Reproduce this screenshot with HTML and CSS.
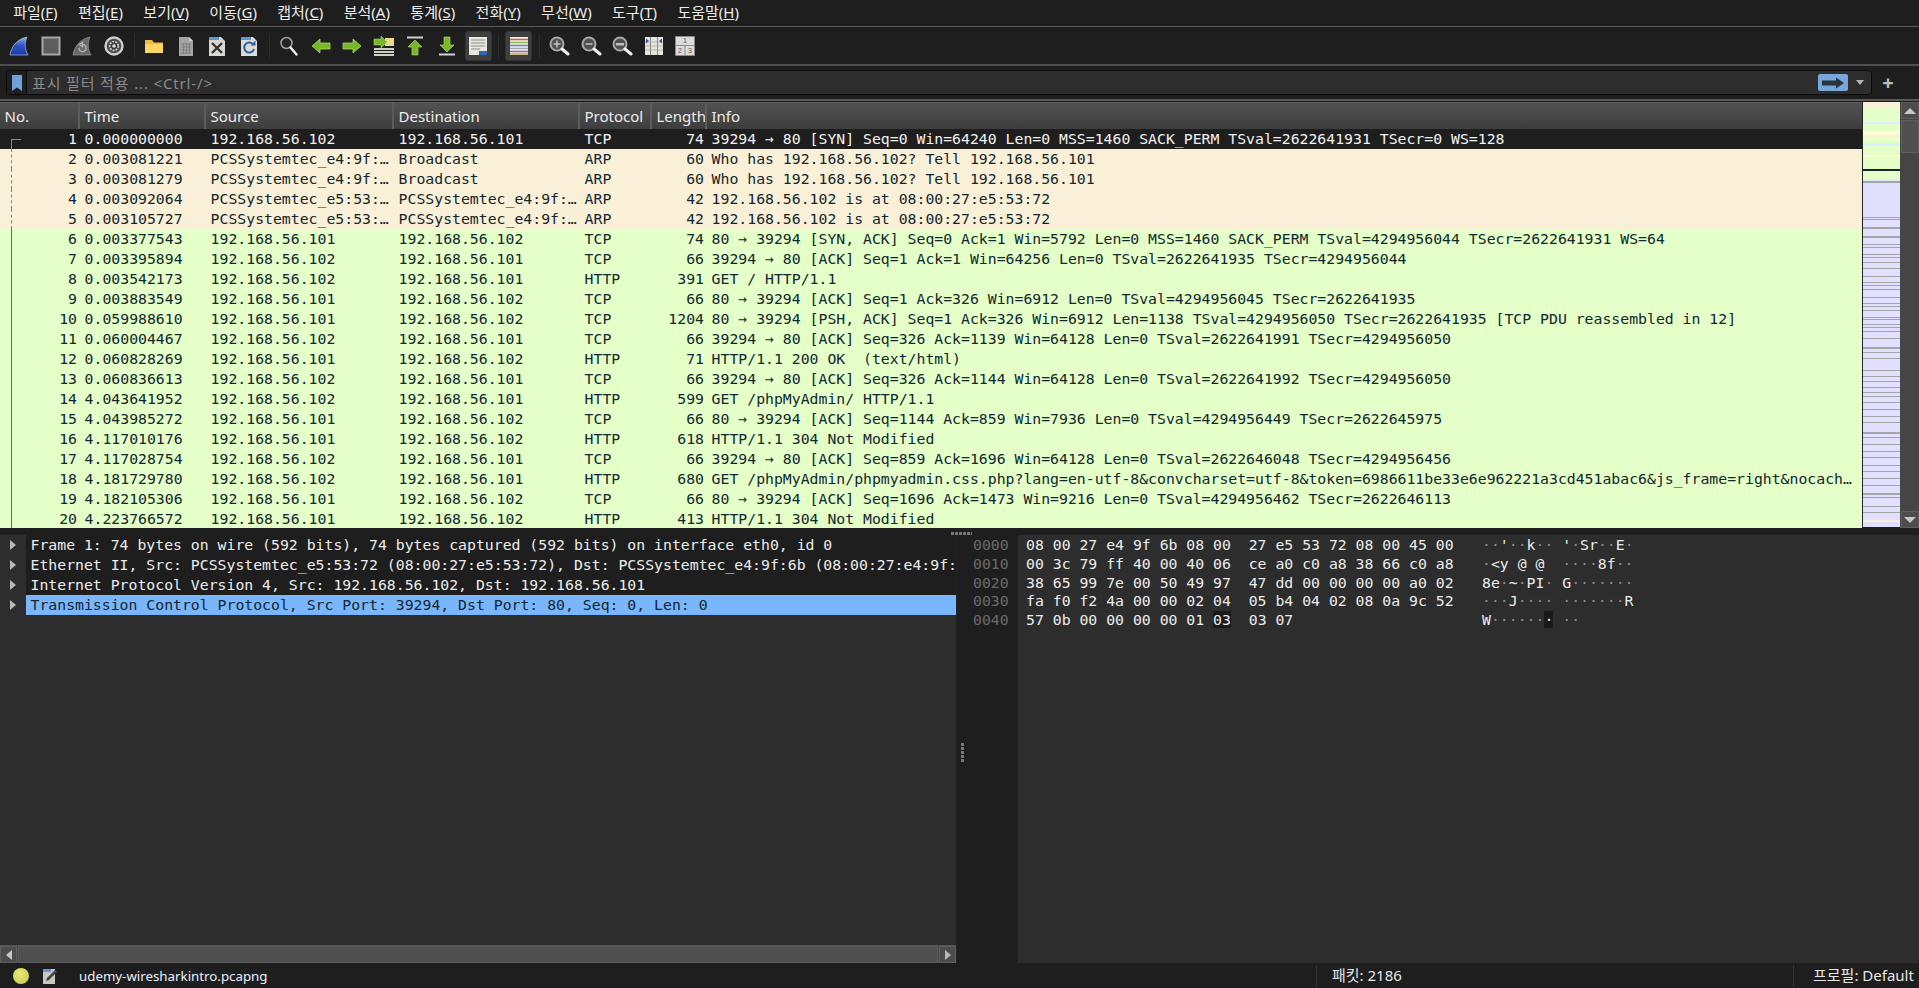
FILE: index.html
```html
<!DOCTYPE html>
<html lang="ko">
<head>
<meta charset="utf-8">
<title>udemy-wiresharkintro.pcapng</title>
<link rel="stylesheet" href="styles.css">
</head>
<body>
<nav class="menubar">
  <span class="menu">파일(<u>F</u>)</span><span class="menu">편집(<u>E</u>)</span><span class="menu">보기(<u>V</u>)</span><span class="menu">이동(<u>G</u>)</span><span class="menu">캡처(<u>C</u>)</span><span class="menu">분석(<u>A</u>)</span><span class="menu">통계(<u>S</u>)</span><span class="menu">전화(<u>Y</u>)</span><span class="menu">무선(<u>W</u>)</span><span class="menu">도구(<u>T</u>)</span><span class="menu">도움말(<u>H</u>)</span>
</nav>
<div class="toolbar">
  <span class="tool"><svg width="22" height="22" viewBox="0 0 22 22"><defs><linearGradient id="fin" x1="0" y1="0" x2="0" y2="1"><stop offset="0" stop-color="#8fb4e8"/><stop offset=".45" stop-color="#2f55c8"/><stop offset="1" stop-color="#1c3aa8"/></linearGradient></defs><path d="M2 20C3 12 9 4 19 2C16.500 8 16.500 14 20 20Z" fill="url(#fin)" stroke="#c7d3ea" stroke-width=".6"/></svg></span>
  <span class="tool"><svg width="22" height="22" viewBox="0 0 22 22"><rect x="2.500" y="2.500" width="17" height="17" fill="#5e5e5e" stroke="#a8a8a8" stroke-width="2"/></svg></span>
  <span class="tool"><svg width="22" height="22" viewBox="0 0 22 22"><path d="M2 20C3 12 9 4 19 2C16.500 8 16.500 14 20 20Z" fill="#6a6a6a" stroke="#999" stroke-width=".7"/><path d="M8 13a3.600 3.600 0 1 0 3.500-3.500M11.500 7.500v4l-3-2z" fill="none" stroke="#b5b5b5" stroke-width="1.300"/></svg></span>
  <span class="tool"><svg width="22" height="22" viewBox="0 0 22 22"><circle cx="11" cy="11" r="8.500" fill="#4a4a4a" stroke="#d0d0d0" stroke-width="2.400"/><circle cx="11" cy="11" r="4.300" fill="#3a3a3a" stroke="#c8c8c8" stroke-width="1.800" stroke-dasharray="2 1"/><circle cx="11" cy="11" r="1.800" fill="#ddd"/></svg></span>
  <i class="sep"></i>
  <span class="tool"><svg width="22" height="22" viewBox="0 0 22 22"><path d="M2 18V5h7l2 2.500h9V18Z" fill="#f3b93a"/><path d="M2 18V9h18v9Z" fill="#fbd865"/></svg></span>
  <span class="tool"><svg width="22" height="22" viewBox="0 0 22 22"><path d="M4 2h10l4 4v15H4Z" fill="#a3a3a3"/><path d="M14 2v4h4z" fill="#d0d0d0"/><path d="M6 9h10M6 12h10M6 15h10M6 18h10M8.500 8v11M11.500 8v11M14.500 8v11" stroke="#7c7c7c" stroke-width=".8" fill="none"/></svg></span>
  <span class="tool"><svg width="22" height="22" viewBox="0 0 22 22"><path d="M3 2h12l4 4v15H3Z" fill="#d9d9cf"/><path d="M3 2h10v3H3z" fill="#5f9ad8"/><path d="M6 8l10 10M16 8 6 18" stroke="#333" stroke-width="2.400"/></svg></span>
  <span class="tool"><svg width="22" height="22" viewBox="0 0 22 22"><path d="M3 2h12l4 4v15H3Z" fill="#dcdcd2"/><path d="M3 2h10v3H3z" fill="#5f9ad8"/><path d="M15.500 10a5 5 0 1 0 .5 4" fill="none" stroke="#2b62ac" stroke-width="2"/><path d="M12.500 10.500h5v-5z" fill="#2b62ac"/></svg></span>
  <i class="sep"></i>
  <span class="tool"><svg width="22" height="22" viewBox="0 0 22 22"><circle cx="8.500" cy="8" r="5.500" fill="#242424" stroke="#a4a4a4" stroke-width="1.500"/><path d="M12.500 12.500l6 7" stroke="#f0f0f0" stroke-width="2.400" stroke-linecap="round"/></svg></span>
  <span class="tool"><svg width="22" height="22" viewBox="0 0 22 22"><path d="M2 11l8-7v4h10v6H10v4z" fill="#76b82a" stroke="#a8d468" stroke-width=".8"/></svg></span>
  <span class="tool"><svg width="22" height="22" viewBox="0 0 22 22"><path d="M20 11l-8-7v4H2v6h10v4z" fill="#76b82a" stroke="#a8d468" stroke-width=".8"/></svg></span>
  <span class="tool"><svg width="22" height="22" viewBox="0 0 22 22"><path d="M1 13h20v2H1zM1 16h20v2H1zM1 19h20v2H1z" fill="#cfcfc8"/><path d="M12 3h9v8h-9z" fill="#e8dc8a"/><path d="M14 7 8 1v3H1v6h7v3z" fill="#76b82a" stroke="#a8d468" stroke-width=".6"/></svg></span>
  <span class="tool"><svg width="22" height="22" viewBox="0 0 22 22"><path d="M3 2.500h16" stroke="#d0d0d0" stroke-width="2"/><path d="M11 5l7 7h-4v8H8v-8H4z" fill="#76b82a" stroke="#a8d468" stroke-width=".7"/></svg></span>
  <span class="tool"><svg width="22" height="22" viewBox="0 0 22 22"><path d="M3 19.500h16" stroke="#d0d0d0" stroke-width="2"/><path d="M11 17l7-7h-4V2H8v8H4z" fill="#76b82a" stroke="#a8d468" stroke-width=".7"/></svg></span>
  <span class="tool boxed"><svg width="22" height="22" viewBox="0 0 22 22"><path d="M2 2h18v18H2z" fill="#e8e8e0"/><path d="M4 5h14M4 8h14M4 11h14M4 14h9" stroke="#8b8b8b" stroke-width="1"/><path d="M12 16h8v4h-8z" fill="#2f66b8"/></svg></span>
  <i class="sep"></i>
  <span class="tool boxed"><svg width="22" height="22" viewBox="0 0 22 22"><path d="M2 2h18v18H2z" fill="#efefe8"/><path d="M2 4.500h18" stroke="#d8544c" stroke-width="1.500"/><path d="M2 7.500h18" stroke="#8fbd50" stroke-width="1.500"/><path d="M2 10.500h18" stroke="#6b7fd0" stroke-width="1.500"/><path d="M2 13.500h18" stroke="#a8a8a8" stroke-width="1.500"/><path d="M2 16.500h18" stroke="#8a6aa8" stroke-width="1.500"/><path d="M2 19h18" stroke="#c8a850" stroke-width="1.500"/></svg></span>
  <i class="sep"></i>
  <span class="tool"><svg width="22" height="22" viewBox="0 0 22 22"><circle cx="9" cy="9" r="6.500" fill="#505050" stroke="#a8a8a8" stroke-width="2"/><path d="M5.500 9h7M9 5.500v7" stroke="#c0c0c0" stroke-width="1.500"/><path d="M14 14l6 5" stroke="#f0f0f0" stroke-width="3" stroke-linecap="round"/></svg></span>
  <span class="tool"><svg width="22" height="22" viewBox="0 0 22 22"><circle cx="9" cy="9" r="6.500" fill="#505050" stroke="#a8a8a8" stroke-width="2"/><path d="M5.500 9h7" stroke="#c0c0c0" stroke-width="1.500"/><path d="M14 14l6 5" stroke="#f0f0f0" stroke-width="3" stroke-linecap="round"/></svg></span>
  <span class="tool"><svg width="22" height="22" viewBox="0 0 22 22"><circle cx="9" cy="9" r="6.500" fill="#505050" stroke="#a8a8a8" stroke-width="2"/><path d="M5 8h8v2.500H5z" fill="#c0c0c0"/><path d="M14 14l6 5" stroke="#f0f0f0" stroke-width="3" stroke-linecap="round"/></svg></span>
  <span class="tool"><svg width="22" height="22" viewBox="0 0 22 22"><path d="M2 2h18v18H2z" fill="#e4e4dc"/><path d="M2 7h18M2 11h18M2 15h18" stroke="#b8b8b0"/><path d="M7.500 2v18M14.500 2v18" stroke="#888"/><path d="M3 3.500l3 2.500-3 2.500zM19 3.500l-3 2.500 3 2.500z" fill="#2a5fae"/></svg></span>
  <span class="tool"><svg width="22" height="22" viewBox="0 0 22 22"><path d="M1.500 1.500h19v19h-19z" fill="#dcdcdc" stroke="#8a8a8a"/><path d="M1.500 10.500h19M11 10.500v10" stroke="#8a8a8a"/><text x="11" y="8" class="layout-num">1</text><text x="6" y="18" class="layout-num">2</text><text x="16" y="18" class="layout-num">3</text></svg></span>
</div>
<div class="filterbar">
  <div class="filterbox">
    <span class="bookmark"><svg width="12" height="18" viewBox="0 0 12 18"><path d="M1 1h10v16L6 13.500 1 17Z" fill="#6ea2d8"/></svg></span>
    <span class="placeholder">표시 필터 적용 ... &lt;Ctrl-/&gt;</span>
    <span class="apply"><svg width="24" height="12" viewBox="0 0 24 12"><path d="M1 3.500h14V.5L23 6l-8 5.500v-3H1z" fill="#2b3340"/></svg></span>
    <span class="drop"></span>
  </div>
  <span class="plus">+</span>
</div>
<section class="packets">
  <div class="list">
    <div class="hdr"><span class="h c-no">No.</span><span class="h c-time">Time</span><span class="h c-src">Source</span><span class="h c-dst">Destination</span><span class="h c-pro">Protocol</span><span class="h c-len">Length</span><span class="h c-info">Info</span></div>
    <div class="rows">
      <div class="row sel first"><span class="c c-no">1</span><span class="c c-time">0.000000000</span><span class="c c-src">192.168.56.102</span><span class="c c-dst">192.168.56.101</span><span class="c c-pro">TCP</span><span class="c c-len">74</span><span class="c c-info">39294 → 80 [SYN] Seq=0 Win=64240 Len=0 MSS=1460 SACK_PERM TSval=2622641931 TSecr=0 WS=128</span></div>
      <div class="row arp"><span class="c c-no">2</span><span class="c c-time">0.003081221</span><span class="c c-src">PCSSystemtec_e4:9f:…</span><span class="c c-dst">Broadcast</span><span class="c c-pro">ARP</span><span class="c c-len">60</span><span class="c c-info">Who has 192.168.56.102? Tell 192.168.56.101</span></div>
      <div class="row arp"><span class="c c-no">3</span><span class="c c-time">0.003081279</span><span class="c c-src">PCSSystemtec_e4:9f:…</span><span class="c c-dst">Broadcast</span><span class="c c-pro">ARP</span><span class="c c-len">60</span><span class="c c-info">Who has 192.168.56.102? Tell 192.168.56.101</span></div>
      <div class="row arp"><span class="c c-no">4</span><span class="c c-time">0.003092064</span><span class="c c-src">PCSSystemtec_e5:53:…</span><span class="c c-dst">PCSSystemtec_e4:9f:…</span><span class="c c-pro">ARP</span><span class="c c-len">42</span><span class="c c-info">192.168.56.102 is at 08:00:27:e5:53:72</span></div>
      <div class="row arp"><span class="c c-no">5</span><span class="c c-time">0.003105727</span><span class="c c-src">PCSSystemtec_e5:53:…</span><span class="c c-dst">PCSSystemtec_e4:9f:…</span><span class="c c-pro">ARP</span><span class="c c-len">42</span><span class="c c-info">192.168.56.102 is at 08:00:27:e5:53:72</span></div>
      <div class="row"><span class="c c-no">6</span><span class="c c-time">0.003377543</span><span class="c c-src">192.168.56.101</span><span class="c c-dst">192.168.56.102</span><span class="c c-pro">TCP</span><span class="c c-len">74</span><span class="c c-info">80 → 39294 [SYN, ACK] Seq=0 Ack=1 Win=5792 Len=0 MSS=1460 SACK_PERM TSval=4294956044 TSecr=2622641931 WS=64</span></div>
      <div class="row"><span class="c c-no">7</span><span class="c c-time">0.003395894</span><span class="c c-src">192.168.56.102</span><span class="c c-dst">192.168.56.101</span><span class="c c-pro">TCP</span><span class="c c-len">66</span><span class="c c-info">39294 → 80 [ACK] Seq=1 Ack=1 Win=64256 Len=0 TSval=2622641935 TSecr=4294956044</span></div>
      <div class="row"><span class="c c-no">8</span><span class="c c-time">0.003542173</span><span class="c c-src">192.168.56.102</span><span class="c c-dst">192.168.56.101</span><span class="c c-pro">HTTP</span><span class="c c-len">391</span><span class="c c-info">GET / HTTP/1.1</span></div>
      <div class="row"><span class="c c-no">9</span><span class="c c-time">0.003883549</span><span class="c c-src">192.168.56.101</span><span class="c c-dst">192.168.56.102</span><span class="c c-pro">TCP</span><span class="c c-len">66</span><span class="c c-info">80 → 39294 [ACK] Seq=1 Ack=326 Win=6912 Len=0 TSval=4294956045 TSecr=2622641935</span></div>
      <div class="row"><span class="c c-no">10</span><span class="c c-time">0.059988610</span><span class="c c-src">192.168.56.101</span><span class="c c-dst">192.168.56.102</span><span class="c c-pro">TCP</span><span class="c c-len">1204</span><span class="c c-info">80 → 39294 [PSH, ACK] Seq=1 Ack=326 Win=6912 Len=1138 TSval=4294956050 TSecr=2622641935 [TCP PDU reassembled in 12]</span></div>
      <div class="row"><span class="c c-no">11</span><span class="c c-time">0.060004467</span><span class="c c-src">192.168.56.102</span><span class="c c-dst">192.168.56.101</span><span class="c c-pro">TCP</span><span class="c c-len">66</span><span class="c c-info">39294 → 80 [ACK] Seq=326 Ack=1139 Win=64128 Len=0 TSval=2622641991 TSecr=4294956050</span></div>
      <div class="row"><span class="c c-no">12</span><span class="c c-time">0.060828269</span><span class="c c-src">192.168.56.101</span><span class="c c-dst">192.168.56.102</span><span class="c c-pro">HTTP</span><span class="c c-len">71</span><span class="c c-info">HTTP/1.1 200 OK  (text/html)</span></div>
      <div class="row"><span class="c c-no">13</span><span class="c c-time">0.060836613</span><span class="c c-src">192.168.56.102</span><span class="c c-dst">192.168.56.101</span><span class="c c-pro">TCP</span><span class="c c-len">66</span><span class="c c-info">39294 → 80 [ACK] Seq=326 Ack=1144 Win=64128 Len=0 TSval=2622641992 TSecr=4294956050</span></div>
      <div class="row"><span class="c c-no">14</span><span class="c c-time">4.043641952</span><span class="c c-src">192.168.56.102</span><span class="c c-dst">192.168.56.101</span><span class="c c-pro">HTTP</span><span class="c c-len">599</span><span class="c c-info">GET /phpMyAdmin/ HTTP/1.1</span></div>
      <div class="row"><span class="c c-no">15</span><span class="c c-time">4.043985272</span><span class="c c-src">192.168.56.101</span><span class="c c-dst">192.168.56.102</span><span class="c c-pro">TCP</span><span class="c c-len">66</span><span class="c c-info">80 → 39294 [ACK] Seq=1144 Ack=859 Win=7936 Len=0 TSval=4294956449 TSecr=2622645975</span></div>
      <div class="row"><span class="c c-no">16</span><span class="c c-time">4.117010176</span><span class="c c-src">192.168.56.101</span><span class="c c-dst">192.168.56.102</span><span class="c c-pro">HTTP</span><span class="c c-len">618</span><span class="c c-info">HTTP/1.1 304 Not Modified</span></div>
      <div class="row"><span class="c c-no">17</span><span class="c c-time">4.117028754</span><span class="c c-src">192.168.56.102</span><span class="c c-dst">192.168.56.101</span><span class="c c-pro">TCP</span><span class="c c-len">66</span><span class="c c-info">39294 → 80 [ACK] Seq=859 Ack=1696 Win=64128 Len=0 TSval=2622646048 TSecr=4294956456</span></div>
      <div class="row"><span class="c c-no">18</span><span class="c c-time">4.181729780</span><span class="c c-src">192.168.56.102</span><span class="c c-dst">192.168.56.101</span><span class="c c-pro">HTTP</span><span class="c c-len">680</span><span class="c c-info">GET /phpMyAdmin/phpmyadmin.css.php?lang=en-utf-8&amp;convcharset=utf-8&amp;token=6986611be33e6e962221a3cd451abac6&amp;js_frame=right&amp;nocach…</span></div>
      <div class="row"><span class="c c-no">19</span><span class="c c-time">4.182105306</span><span class="c c-src">192.168.56.101</span><span class="c c-dst">192.168.56.102</span><span class="c c-pro">TCP</span><span class="c c-len">66</span><span class="c c-info">80 → 39294 [ACK] Seq=1696 Ack=1473 Win=9216 Len=0 TSval=4294956462 TSecr=2622646113</span></div>
      <div class="row"><span class="c c-no">20</span><span class="c c-time">4.223766572</span><span class="c c-src">192.168.56.101</span><span class="c c-dst">192.168.56.102</span><span class="c c-pro">HTTP</span><span class="c c-len">413</span><span class="c c-info">HTTP/1.1 304 Not Modified</span></div>
    </div>
  </div>
  <svg class="minimap" width="37" height="425" viewBox="0 0 37 425" shape-rendering="crispEdges">
    <rect width="37" height="425" fill="#e1e1ff"/>
    <rect y="0" width="37" height="5" fill="#faf0d7"/>
    <rect y="5" width="37" height="15" fill="#e4ffc7"/>
    <rect y="20" width="37" height="2" fill="#daeeff"/>
    <rect y="22" width="37" height="7" fill="#e4ffc7"/>
    <rect y="29" width="37" height="4" fill="#ffffd0"/>
    <rect y="33" width="37" height="2" fill="#faf0d7"/>
    <rect y="35" width="37" height="6" fill="#e4ffc7"/>
    <rect y="41" width="37" height="3" fill="#daeeff"/>
    <rect y="44" width="37" height="9" fill="#e4ffc7"/>
    <rect y="53" width="37" height="2" fill="#ffffd0"/>
    <rect y="55" width="37" height="12" fill="#e4ffc7"/>
    <rect y="67" width="37" height="2" fill="#12272e"/>
    <rect y="69" width="37" height="8" fill="#e4ffc7"/>
    <rect y="77" width="37" height="2" fill="#daeeff"/>
    <path d="M0 79h37v2H0zM0 115h37v1H0zM0 117h37v1H0zM0 125h37v2H0zM0 134h37v1H0zM0 135h37v1H0zM0 142h37v1H0zM0 145h37v1H0zM0 152h37v1H0zM0 155h37v1H0zM0 160h37v1H0zM0 166h37v1H0zM0 174h37v1H0zM0 180h37v1H0zM0 183h37v1H0zM0 187h37v1H0zM0 195h37v1H0zM0 201h37v1H0zM0 204h37v1H0zM0 208h37v1H0zM0 215h37v1H0zM0 217h37v1H0zM0 222h37v1H0zM0 225h37v1H0zM0 229h37v1H0zM0 236h37v1H0zM0 245h37v2H0zM0 250h37v1H0zM0 256h37v1H0zM0 268h37v1H0zM0 274h37v1H0zM0 279h37v1H0zM0 285h37v1H0zM0 290h37v1H0zM0 294h37v1H0zM0 300h37v1H0zM0 307h37v1H0zM0 314h37v1H0zM0 320h37v1H0zM0 330h37v2H0zM0 335h37v1H0zM0 342h37v1H0zM0 349h37v1H0zM0 355h37v1H0zM0 363h37v1H0zM0 369h37v1H0zM0 376h37v1H0zM0 383h37v1H0zM0 391h37v2H0zM0 395h37v1H0zM0 404h37v1H0zM0 410h37v1H0z" fill="#a3a3a8"/>
    <rect y="418" width="37" height="2" fill="#faf0d7"/>
  </svg>
  <div class="vscroll">
    <span class="sbtn"><i class="tri-up"></i></span>
    <span class="vthumb"></span>
    <span class="vtrack"></span>
    <span class="sbtn"><i class="tri-down"></i></span>
  </div>
</section>
<div class="hsplit"></div>
<section class="lower">
  <div class="detail">
    <div class="tree">
      <div class="node"><span class="twisty"><i class="tri-right"></i></span><span class="label">Frame 1: 74 bytes on wire (592 bits), 74 bytes captured (592 bits) on interface eth0, id 0</span></div>
      <div class="node"><span class="twisty"><i class="tri-right"></i></span><span class="label">Ethernet II, Src: PCSSystemtec_e5:53:72 (08:00:27:e5:53:72), Dst: PCSSystemtec_e4:9f:6b (08:00:27:e4:9f:</span></div>
      <div class="node"><span class="twisty"><i class="tri-right"></i></span><span class="label">Internet Protocol Version 4, Src: 192.168.56.102, Dst: 192.168.56.101</span></div>
      <div class="node on"><span class="twisty"><i class="tri-right"></i></span><span class="label">Transmission Control Protocol, Src Port: 39294, Dst Port: 80, Seq: 0, Len: 0</span></div>
    </div>
    <div class="hscroll">
      <span class="sbtn"><i class="tri-left"></i></span>
      <span class="hthumb"></span>
      <span class="sbtn"><i class="tri-right"></i></span>
    </div>
  </div>
  <div class="gutter">
    <div class="hgrip"></div>
    <div class="offset">0000</div><div class="offset">0010</div><div class="offset">0020</div><div class="offset">0030</div><div class="offset">0040</div>
    <div class="vgrip"></div>
  </div>
  <div class="hex">
    <pre class="bytes">08 00 27 e4 9f 6b 08 00  27 e5 53 72 08 00 45 00
00 3c 79 ff 40 00 40 06  ce a0 c0 a8 38 66 c0 a8
38 65 99 7e 00 50 49 97  47 dd 00 00 00 00 a0 02
fa f0 f2 4a 00 00 02 04  05 b4 04 02 08 0a 9c 52
57 0b 00 00 00 00 01 <b class="cursor">03</b>  03 07</pre>
    <pre class="ascii"><s>··</s>'<s>··</s>k<s>··</s> '<s>·</s>Sr<s>··</s>E<s>·</s>
<s>·</s>&lt;y @ @  <s>····</s>8f<s>··</s>
8e<s>·</s>~<s>·</s>PI<s>·</s> G<s>·······</s>
<s>···</s>J<s>····</s> <s>·······</s>R
W<s>······</s><b class="cursor">·</b> <s>··</s></pre>
  </div>
</section>
<footer class="status">
  <span class="led"></span>
  <svg class="note" width="18" height="18" viewBox="0 0 18 18"><path d="M2 2h12v15H2z" fill="#c8c8c0"/><path d="M2 2h8v3H2z" fill="#5f9ad8"/><path d="M5 14l1-3 8-8 2 2-8 8z" fill="#444"/></svg>
  <span class="file">udemy-wiresharkintro.pcapng</span>
  <span class="stat packets-count">패킷: 2186</span>
  <span class="stat profile">프로필: Default</span>
</footer>
</body>
</html>
```
FILE: styles.css
```css
* { box-sizing: border-box; }
html, body { margin: 0; height: 988px; overflow: hidden; }
body {
  display: flex; flex-direction: column;
  background: #1e1e1e; color: #e6e6e6;
  font-family: "Noto Sans", "Noto Sans CJK KR", sans-serif; font-size: 14px;
}
.menubar { height: 27px; flex: none; display: flex; align-items: center; padding: 0 0 2px 3px; border-bottom: 1px solid #5a5a5a; }
.menu { padding: 0 10.2px; line-height: 22px; font-size: 15px; white-space: nowrap; color: #ececec; }
.toolbar { height: 39px; flex: none; display: flex; align-items: center; padding-left: 3.5px; border-bottom: 2px solid #4e4e4e; }
.tool { width: 31.5px; height: 30px; flex: none; display: flex; align-items: center; justify-content: center; }
.tool.boxed { background: #3f3f3f; border: 1px solid #333; border-radius: 3px; width: 27px; margin: 0 2.25px; }
.sep { width: 1px; height: 24px; flex: none; background: #2c2c2c; margin: 0 4px; }
.layout-num { font-family: "Liberation Sans", sans-serif; font-size: 7px; fill: #555; text-anchor: middle; }
.filterbar { height: 35px; flex: none; display: flex; align-items: center; padding-left: 6px; border-bottom: 2px solid #5a5a5a; }
.filterbox { width: 1866px; height: 25px; flex: none; display: flex; align-items: center; background: #2d2d2d; border: 1px solid #0a0a0a; border-radius: 4px; }
.bookmark { width: 20px; height: 23px; flex: none; display: flex; align-items: center; justify-content: center; background: #1e1e1e; border-right: 1px solid #0a0a0a; border-radius: 4px 0 0 4px; }
.placeholder { flex: 1; padding-left: 5px; color: #8a8a8a; font-size: 15px; letter-spacing: 0.85px; white-space: pre; }
.apply { width: 30px; height: 17px; flex: none; display: flex; align-items: center; justify-content: center; background: #76a7db; border-radius: 2px; }
.drop { width: 23px; flex: none; display: flex; justify-content: center; }
.drop::before { content: ""; border: 4px solid transparent; border-top: 5px solid #b4b4b4; border-bottom: 0; }
.plus { width: 32px; text-align: center; color: #bdbdbd; font-size: 20px; font-weight: 700; line-height: 20px; }
.packets { height: 426px; flex: none; display: flex; margin-top: 1px; }
.list { width: 1863px; flex: none; overflow: hidden; border-right: 1px solid #222; }
.hdr { height: 27px; display: flex; background: linear-gradient(#525252, #3d3d3d); border-top: 1px solid #5a5a5a; }
.h { flex: none; height: 26px; line-height: 26px; padding-left: 4.5px; border-right: 2px solid #5c5c5c; color: #ececec; font-size: 15px; white-space: nowrap; overflow: hidden; }
.c-no { width: 80px; }
.c-time { width: 126px; }
.c-src { width: 188px; }
.c-dst { width: 186px; }
.c-pro { width: 72px; }
.c-len { width: 55px; }
.c-info { flex: 1; }
.h.c-info { border-right: 0; }
.rows { font-family: "DejaVu Sans Mono", monospace; font-size: 14.8px; }
.row { height: 20px; display: flex; background: #e4ffc7; color: #12272e; white-space: pre; }
.row.arp { background: #faf0d7; }
.row.sel { background: #1e1e1e; color: #f2f2f2; }
.c { flex: none; line-height: 20px; overflow: hidden; padding-left: 4.600px; }
.c.c-no { position: relative; text-align: right; padding-right: 3px; padding-left: 0; overflow: visible; }
.c.c-len { text-align: right; padding-right: 3px; padding-left: 0; }
.c.c-info { flex: 1; }
.c.c-no::before { content: ""; position: absolute; left: 11px; top: 0; bottom: 0; border-left: 1px solid #5f6b60; }
.arp .c.c-no::before { border-left: 1px dashed #8a8070; }
.first .c.c-no::before { top: 10px; border-left-color: #8a8a8a; }
.first .c.c-no::after { content: ""; position: absolute; left: 11px; top: 10px; width: 10px; border-top: 1px solid #8a8a8a; }
.minimap { flex: none; display: block; }
.vscroll { width: 19px; flex: none; display: flex; flex-direction: column; background: #454545; }
.sbtn { width: 17px; height: 17px; flex: none; display: flex; align-items: center; justify-content: center; background: #4c4c4c; border: 1px solid #5e5e5e; }
.vscroll .sbtn { width: 18px; margin-left: 1px; }
.vthumb { height: 33px; margin: 1px 0 1px 1px; background: #505050; border: 1px solid #606060; flex: none; }
.vtrack { flex: 1; }
.tri-up { border: 6px solid transparent; border-bottom: 6px solid #c8c8c8; border-top: 0; }
.tri-down { border: 6px solid transparent; border-top: 6px solid #c8c8c8; border-bottom: 0; }
.tri-left { border: 5px solid transparent; border-right: 6px solid #c8c8c8; border-left: 0; }
.tri-right { display: block; border: 5px solid transparent; border-left: 6px solid #b8b8b8; border-right: 0; }
.hsplit { height: 7px; flex: none; position: relative; }
.hsplit::after { content: ""; position: absolute; left: 951px; top: 4px; width: 21px; height: 3px; background: repeating-linear-gradient(90deg, #777 0 3px, transparent 3px 4px); }
.lower { flex: 1; min-height: 0; display: flex; }
.detail { width: 957px; flex: none; display: flex; flex-direction: column; background: #2d2d2d; border-right: 1px solid #222; }
.tree { flex: 1; overflow: hidden; font-family: "DejaVu Sans Mono", monospace; font-size: 14.8px; }
.node { height: 20px; display: flex; white-space: pre; line-height: 20px; }
.twisty { width: 26px; flex: none; display: flex; align-items: center; justify-content: center; }
.label { flex: 1; overflow: hidden; padding-left: 4.500px; background: #1e1e1e; color: #ececec; }
.node.on .label { background: #7ab6fb; color: #12272e; }
.hscroll { height: 18px; flex: none; display: flex; background: #474747; border-top: 1px solid #555; }
.hthumb { flex: 1; background: #505050; border: 1px solid #5c5c5c; margin: 0 1px; }
.gutter { width: 61px; flex: none; position: relative; padding-left: 16px; font-family: "DejaVu Sans Mono", monospace; font-size: 14.8px; line-height: 18.75px; color: #6a6a6a; }
.offset { white-space: pre; }
.hgrip { height: 1px; }
.vgrip { position: absolute; left: 4px; top: 208px; width: 3px; height: 20px; background: repeating-linear-gradient(#777 0 3px, transparent 3px 4px); }
.hex { flex: 1; display: flex; background: #2d2d2d; padding: 1px 0 0 8px; font-family: "DejaVu Sans Mono", monospace; font-size: 14.8px; line-height: 18.75px; color: #ececec; }
.bytes, .ascii { margin: 0; font: inherit; }
.bytes { width: 456px; }
.ascii s { text-decoration: none; color: #8a8a8a; }
.cursor { font-weight: 400; background: #1a1a1a; }
.status { height: 25px; flex: none; display: flex; align-items: center; background: #1e1e1e; font-size: 14px; position: relative; }
.led { width: 16px; height: 16px; flex: none; margin-left: 13px; border-radius: 50%; background: radial-gradient(circle at 40% 35%, #e8e878, #c8c84e); }
.note { flex: none; margin-left: 12px; }
.file { margin-left: 20px; color: #e8f0ff; font-size: 13.3px; }
.stat { white-space: nowrap; border-left: 1px solid #333; padding-left: 15px; height: 22px; line-height: 21px; font-size: 15px; }
.packets-count { margin-left: auto; width: 477px; }
.profile { width: 126px; padding-left: 19px; }
```
